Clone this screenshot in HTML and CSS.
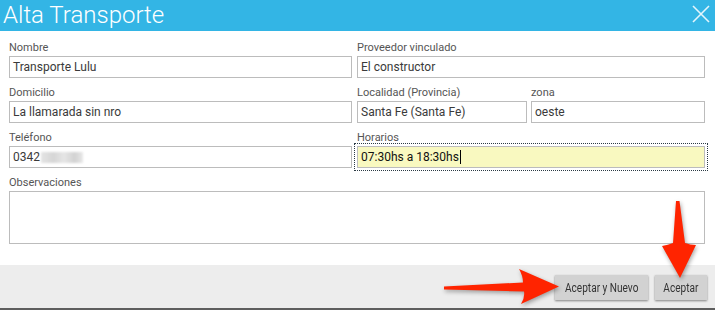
FILE: index.html
```html
<!DOCTYPE html>
<html>
<head>
  <title>Alta Transporte</title>
  <link rel="stylesheet" href="styles.css">
</head>
<body>
  <div class="dialog">
    <div class="dialog-header">
      <h1>Alta Transporte</h1>
      <svg class="close" width="20" height="20" viewBox="0 0 20 20">
        <path d="M2 2 L18 18 M18 2 L2 18" stroke="#e3f5fc" stroke-width="1.6" fill="none"/>
      </svg>
    </div>

    <div class="dialog-body">
      <div class="form-grid">
        <div class="field">
          <label>Nombre</label>
          <div class="input">Transporte Lulu</div>
        </div>
        <div class="field">
          <label>Proveedor vinculado</label>
          <div class="input">El constructor</div>
        </div>

        <div class="field">
          <label>Domicilio</label>
          <div class="input">La llamarada sin nro</div>
        </div>
        <div class="split">
          <div class="field">
            <label>Localidad (Provincia)</label>
            <div class="input">Santa Fe (Santa Fe)</div>
          </div>
          <div class="field">
            <label>zona</label>
            <div class="input">oeste</div>
          </div>
        </div>

        <div class="field">
          <label>Teléfono</label>
          <div class="input">0342<span class="blurred"></span></div>
        </div>
        <div class="field">
          <label>Horarios</label>
          <div class="input focused">07:30hs a 18:30hs<span class="caret"></span></div>
        </div>

        <div class="field wide">
          <label>Observaciones</label>
          <div class="input textarea"></div>
        </div>
      </div>
    </div>

    <div class="dialog-footer">
      <button class="btn"><span>Aceptar y Nuevo</span></button>
      <button class="btn"><span>Aceptar</span></button>
    </div>
  </div>

  <!-- annotation arrows drawn over the screenshot -->
  <svg class="annotations" width="715" height="310" viewBox="0 0 715 310">
    <path d="M444 286.5 L523 282.5 Q523 276 519 269 L559 286.5 L521 304 Q525 298 524 291.5 L444 289.5 Z" fill="#ff2400"/>
    <path d="M676 201 L679.5 201 L685 243 Q690 245 696 245 L680 278 L662 246 Q668 245 673 243 Z" fill="#ff2400"/>
  </svg>
</body>
</html>
```

FILE: styles.css
```css
body {
  margin: 0;
  font-family: Roboto, 'Liberation Sans', sans-serif;
  background: #fff;
  width: 715px;
  height: 310px;
  overflow: hidden;
  position: relative;
}

.dialog {
  display: flex;
  flex-direction: column;
  height: 310px;
}

.dialog-header {
  height: 31px;
  background: #33b5e5;
  display: flex;
  align-items: center;
  justify-content: space-between;
  padding: 0 4px 0 3px;
}

.dialog-header h1 {
  margin: 0;
  font-size: 24px;
  font-weight: 300;
  color: #fff;
  line-height: 31px;
}

.close {
  margin-top: -3px;
}

.dialog-body {
  padding: 9px 10px 19px 9px;
  flex: 1;
}

.form-grid {
  display: grid;
  grid-template-columns: 343px 1fr;
  column-gap: 5px;
  row-gap: 7px;
}

.split {
  display: grid;
  grid-template-columns: 170px 1fr;
  column-gap: 4px;
}

.field {
  display: flex;
  flex-direction: column;
}

.field.wide {
  grid-column: 1 / 3;
}

.field label {
  font-size: 11px;
  line-height: 13px;
  color: #555;
  padding-top: 1px;
  margin-bottom: 2px;
}

.input {
  height: 22px;
  box-sizing: border-box;
  border: 1px solid #bcbcbc;
  padding: 0 3px;
  font-size: 12px;
  line-height: 20px;
  color: #3a3a3a;
  display: flex;
  align-items: center;
}

.input.textarea {
  height: 53px;
}

.input.focused {
  background: #f9f9c0;
  color: #111;
  outline: 1px dotted #2b3a44;
  outline-offset: 2px;
}

.caret {
  display: inline-block;
  width: 1px;
  height: 14px;
  background: #000;
  margin-left: 1px;
}

.blurred {
  display: inline-block;
  width: 42px;
  height: 11px;
  margin-left: 1px;
  background: linear-gradient(90deg, #e4e4e4 0, #d6d6d6 30%, #e6e6e6 55%, #d2d2d2 80%, #e8e8e8 100%);
  filter: blur(1px);
}

.dialog-footer {
  height: 45px;
  background: #ededed;
  border-bottom: 2px solid #5e5e5e;
  display: flex;
  justify-content: flex-end;
  align-items: flex-start;
  gap: 7px;
  padding: 10px 8px 0 0;
  box-sizing: border-box;
}

.btn {
  height: 25px;
  border: none;
  background: #d2d2d2;
  box-shadow: 0 1px 2px rgba(0, 0, 0, 0.45);
  font-family: Roboto, sans-serif;
  font-size: 12px;
  color: #333;
  padding: 0 8px;
  cursor: pointer;
}

.btn span {
  display: inline-block;
  transform: scaleX(0.84);
  margin: 0 -7px;
}

.btn:first-child {
  width: 93px;
}

.btn:last-child {
  width: 52px;
}

.annotations {
  position: absolute;
  left: 0;
  top: 0;
  pointer-events: none;
  filter: drop-shadow(1px 2px 2px rgba(0, 0, 0, 0.35));
}
```
